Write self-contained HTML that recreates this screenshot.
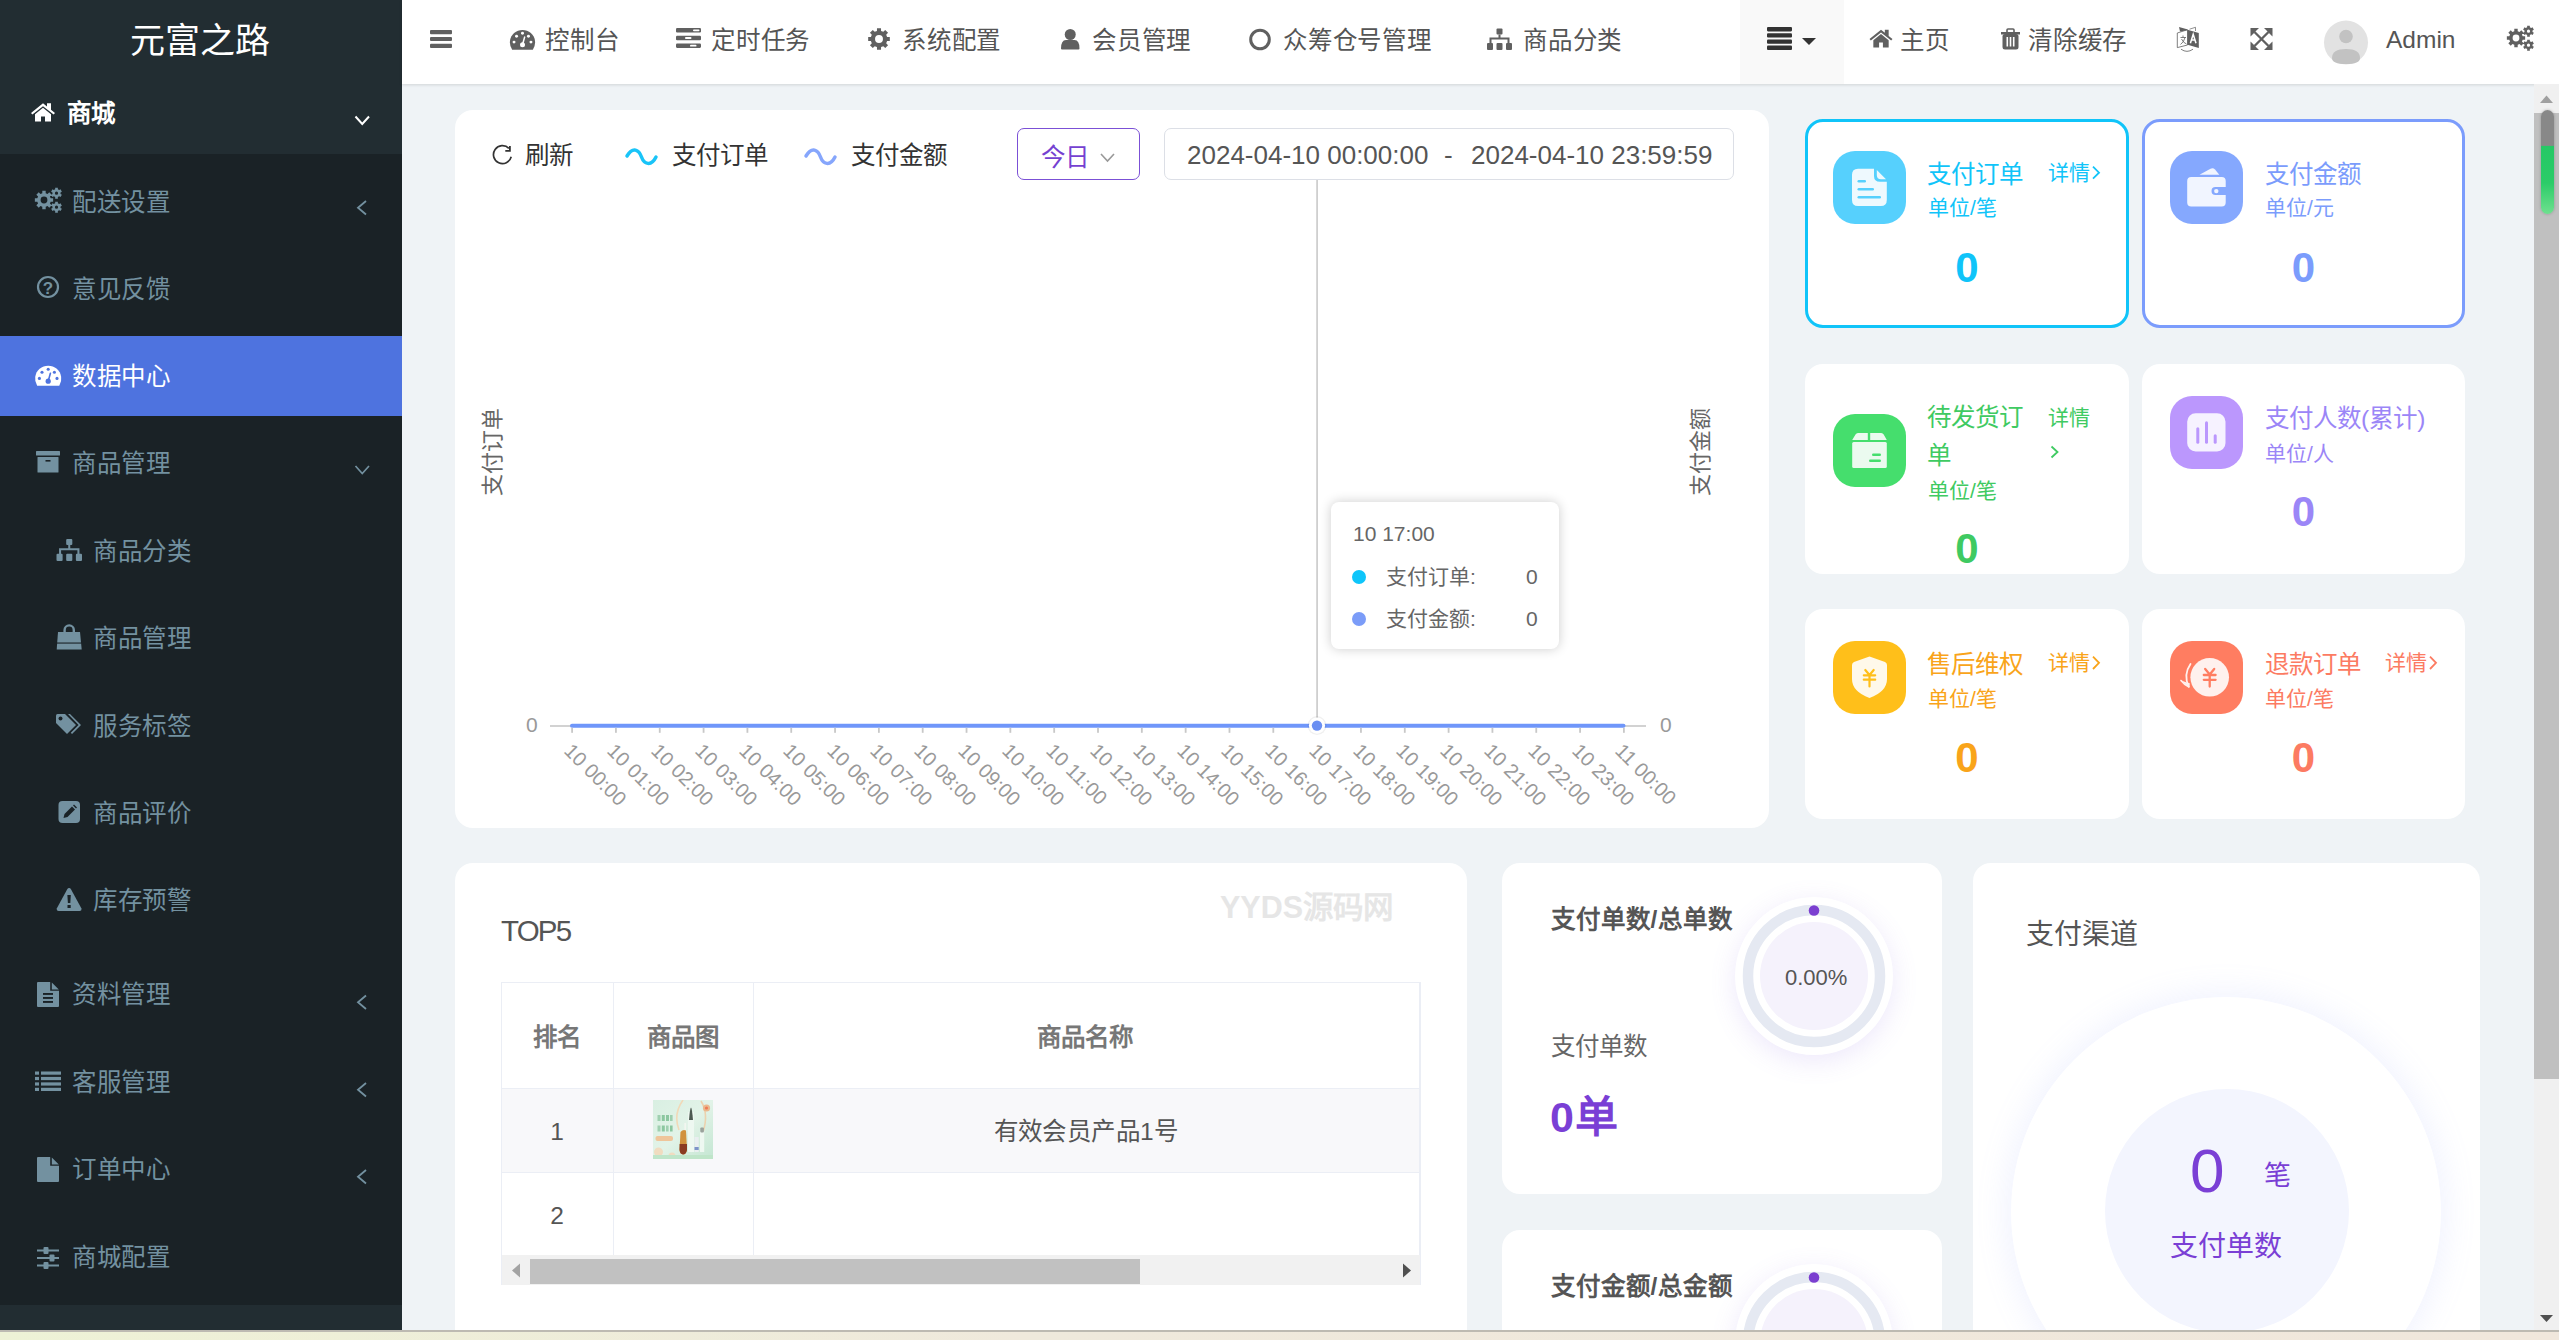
<!DOCTYPE html>
<html lang="zh-CN"><head><meta charset="utf-8"><title>数据中心</title><style>
*{box-sizing:border-box}
html,body{margin:0;padding:0;width:2559px;height:1340px;overflow:hidden;background:#eff3f6;font-family:"Liberation Sans",sans-serif;}
.a{position:absolute;white-space:nowrap}
.ic{position:absolute;left:0;top:0;width:2559px;height:1340px;overflow:visible;pointer-events:none}
.mi{color:#7391a0;font-size:24.5px;line-height:24.5px;letter-spacing:0.7px}
.nv{color:#555;font-size:24.5px;line-height:24.5px;letter-spacing:0.8px}
.card{background:#fff;border-radius:18px}
.t21{font-size:21px;line-height:21px}
.t24{font-size:24.5px;line-height:24.5px}
.xl{font-size:20px;line-height:20px;color:#999;transform-origin:0 0;transform:rotate(45deg)}
</style></head><body>
<div class="a" style="left:0;top:0;width:402px;height:1330px;background:#1a2226"></div>
<div class="a" style="left:0;top:0;width:402px;height:154px;background:#222d32"></div>
<div class="a" style="left:0;top:1305px;width:402px;height:25px;background:#222d32"></div>
<div class="a" style="left:0;top:336px;width:402px;height:80px;background:#4e73df"></div>
<div class="a" style="left:130px;top:23px;font-size:35px;line-height:35px;color:#fff">元富之路</div>
<div class="a t24" style="left:67px;top:102px;color:#fff;font-weight:bold">商城</div>
<div class="a mi" style="left:72px;top:191px;color:#7391a0">配送设置</div>
<div class="a mi" style="left:72px;top:278px;color:#7391a0">意见反馈</div>
<div class="a mi" style="left:72px;top:365px;color:#fff">数据中心</div>
<div class="a mi" style="left:72px;top:452px;color:#7391a0">商品管理</div>
<div class="a mi" style="left:93px;top:540px;color:#7391a0">商品分类</div>
<div class="a mi" style="left:93px;top:627px;color:#7391a0">商品管理</div>
<div class="a mi" style="left:93px;top:715px;color:#7391a0">服务标签</div>
<div class="a mi" style="left:93px;top:802px;color:#7391a0">商品评价</div>
<div class="a mi" style="left:93px;top:889px;color:#7391a0">库存预警</div>
<div class="a mi" style="left:72px;top:983px;color:#7391a0">资料管理</div>
<div class="a mi" style="left:72px;top:1071px;color:#7391a0">客服管理</div>
<div class="a mi" style="left:72px;top:1158px;color:#7391a0">订单中心</div>
<div class="a mi" style="left:72px;top:1246px;color:#7391a0">商城配置</div>
<div class="a" style="left:402px;top:0;width:2157px;height:84px;background:#fff;box-shadow:0 1px 3px rgba(0,0,0,.13)"></div>
<div class="a" style="left:1740px;top:0;width:104px;height:84px;background:#f9f9f9"></div>
<div class="a nv" style="left:545px;top:29px">控制台</div>
<div class="a nv" style="left:711px;top:29px">定时任务</div>
<div class="a nv" style="left:902px;top:29px">系统配置</div>
<div class="a nv" style="left:1092px;top:29px">会员管理</div>
<div class="a nv" style="left:1283px;top:29px">众筹仓号管理</div>
<div class="a nv" style="left:1523px;top:29px">商品分类</div>
<div class="a nv" style="left:1900px;top:29px">主页</div>
<div class="a nv" style="left:2028px;top:29px">清除缓存</div>
<div class="a nv" style="left:2386px;top:28px;letter-spacing:0">Admin</div>
<div class="a card" style="left:455px;top:110px;width:1314px;height:718px"></div>
<div class="a t24" style="left:525px;top:144px;color:#333">刷新</div>
<div class="a t24" style="left:672px;top:144px;color:#333">支付订单</div>
<div class="a t24" style="left:851px;top:144px;color:#333">支付金额</div>
<div class="a" style="left:1017px;top:128px;width:123px;height:52px;border:1.5px solid #7b50d6;border-radius:7px"></div>
<div class="a t24" style="left:1041px;top:146px;color:#7541d1">今日</div>
<div class="a" style="left:1164px;top:128px;width:570px;height:52px;border:1.2px solid #dcdfe6;border-radius:7px"></div>
<div class="a" style="left:1187px;top:140px;font-size:26px;line-height:30px;color:#555">2024-04-10 00:00:00</div>
<div class="a" style="left:1444px;top:140px;font-size:26px;line-height:30px;color:#555">-</div>
<div class="a" style="left:1471px;top:140px;font-size:26px;line-height:30px;color:#555">2024-04-10 23:59:59</div>
<div class="a xl" style="left:574.6px;top:740px">10 00:00</div>
<div class="a xl" style="left:618.4px;top:740px">10 01:00</div>
<div class="a xl" style="left:662.2px;top:740px">10 02:00</div>
<div class="a xl" style="left:706.1px;top:740px">10 03:00</div>
<div class="a xl" style="left:749.9px;top:740px">10 04:00</div>
<div class="a xl" style="left:793.7px;top:740px">10 05:00</div>
<div class="a xl" style="left:837.6px;top:740px">10 06:00</div>
<div class="a xl" style="left:881.4px;top:740px">10 07:00</div>
<div class="a xl" style="left:925.2px;top:740px">10 08:00</div>
<div class="a xl" style="left:969.0px;top:740px">10 09:00</div>
<div class="a xl" style="left:1012.9px;top:740px">10 10:00</div>
<div class="a xl" style="left:1056.7px;top:740px">10 11:00</div>
<div class="a xl" style="left:1100.5px;top:740px">10 12:00</div>
<div class="a xl" style="left:1144.3px;top:740px">10 13:00</div>
<div class="a xl" style="left:1188.2px;top:740px">10 14:00</div>
<div class="a xl" style="left:1232.0px;top:740px">10 15:00</div>
<div class="a xl" style="left:1275.8px;top:740px">10 16:00</div>
<div class="a xl" style="left:1319.6px;top:740px">10 17:00</div>
<div class="a xl" style="left:1363.5px;top:740px">10 18:00</div>
<div class="a xl" style="left:1407.3px;top:740px">10 19:00</div>
<div class="a xl" style="left:1451.1px;top:740px">10 20:00</div>
<div class="a xl" style="left:1494.9px;top:740px">10 21:00</div>
<div class="a xl" style="left:1538.8px;top:740px">10 22:00</div>
<div class="a xl" style="left:1582.6px;top:740px">10 23:00</div>
<div class="a xl" style="left:1626.4px;top:740px">11 00:00</div>
<div class="a" style="left:526px;top:714px;font-size:21px;line-height:21px;color:#999">0</div>
<div class="a" style="left:1660px;top:714px;font-size:21px;line-height:21px;color:#999">0</div>
<div class="a" style="left:482px;top:496px;font-size:22px;line-height:22px;color:#666;transform-origin:0 0;transform:rotate(-90deg)">支付订单</div>
<div class="a" style="left:1690px;top:496px;font-size:22px;line-height:22px;color:#666;transform-origin:0 0;transform:rotate(-90deg)">支付金额</div>
<div class="a" style="left:1331px;top:502px;width:228px;height:147px;background:#fff;border-radius:8px;box-shadow:0 0 12px rgba(0,0,0,.2)"></div>
<div class="a t21" style="left:1353px;top:523px;color:#666">10 17:00</div>
<div class="a t21" style="left:1386px;top:566px;color:#666">支付订单:</div>
<div class="a t21" style="left:1526px;top:566px;color:#666">0</div>
<div class="a t21" style="left:1386px;top:608px;color:#666">支付金额:</div>
<div class="a t21" style="left:1526px;top:608px;color:#666">0</div>
<div class="a card" style="left:1805px;top:119px;width:324px;height:209px;border:3px solid #10c4f9"></div>
<div class="a card" style="left:2142px;top:119px;width:323px;height:209px;border:3px solid #7b9cfc"></div>
<div class="a card" style="left:1805px;top:364px;width:324px;height:210px"></div>
<div class="a card" style="left:2142px;top:364px;width:323px;height:210px"></div>
<div class="a card" style="left:1805px;top:609px;width:324px;height:210px"></div>
<div class="a card" style="left:2142px;top:609px;width:323px;height:210px"></div>
<div class="a t24" style="left:1927px;top:162.5px;color:#10c4f9">支付订单</div>
<div class="a t21" style="left:2048px;top:162px;color:#10c4f9">详情</div>
<div class="a t21" style="left:1928px;top:197px;color:#10c4f9">单位/笔</div>
<div class="a" style="left:1805px;width:324px;text-align:center;top:247px;font-size:42px;line-height:42px;font-weight:bold;color:#10c4f9">0</div>
<div class="a t24" style="left:2265px;top:162.5px;color:#7b9cfc">支付金额</div>
<div class="a t21" style="left:2265px;top:197px;color:#7b9cfc">单位/元</div>
<div class="a" style="left:2142px;width:323px;text-align:center;top:247px;font-size:42px;line-height:42px;font-weight:bold;color:#7b9cfc">0</div>
<div class="a t24" style="left:1927px;top:405.5px;color:#3fca62">待发货订</div>
<div class="a t24" style="left:1927px;top:443.5px;color:#3fca62">单</div>
<div class="a t21" style="left:2048px;top:407px;color:#3fca62">详情</div>
<div class="a t21" style="left:1928px;top:480px;color:#3fca62">单位/笔</div>
<div class="a" style="left:1805px;width:324px;text-align:center;top:528px;font-size:42px;line-height:42px;font-weight:bold;color:#3fca62">0</div>
<div class="a t24" style="left:2265px;top:406.5px;color:#9b86f7">支付人数(累计)</div>
<div class="a t21" style="left:2265px;top:443px;color:#9b86f7">单位/人</div>
<div class="a" style="left:2142px;width:323px;text-align:center;top:491px;font-size:42px;line-height:42px;font-weight:bold;color:#9b86f7">0</div>
<div class="a t24" style="left:1927px;top:652.5px;color:#f9a41a">售后维权</div>
<div class="a t21" style="left:2048px;top:652px;color:#f9a41a">详情</div>
<div class="a t21" style="left:1928px;top:688px;color:#f9a41a">单位/笔</div>
<div class="a" style="left:1805px;width:324px;text-align:center;top:737px;font-size:42px;line-height:42px;font-weight:bold;color:#f9a41a">0</div>
<div class="a t24" style="left:2265px;top:652.5px;color:#fc7b62">退款订单</div>
<div class="a t21" style="left:2385px;top:652px;color:#fc7b62">详情</div>
<div class="a t21" style="left:2265px;top:688px;color:#fc7b62">单位/笔</div>
<div class="a" style="left:2142px;width:323px;text-align:center;top:737px;font-size:42px;line-height:42px;font-weight:bold;color:#fc7b62">0</div>
<div class="a card" style="left:455px;top:863px;width:1012px;height:600px"></div>
<div class="a" style="left:501px;top:915px;font-size:29.5px;line-height:32px;letter-spacing:-1.8px;color:#555">TOP5</div>
<div class="a" style="left:1220px;top:891px;font-size:30.5px;line-height:32px;color:#e6e6e6;font-weight:bold">YYDS源码网</div>
<div class="a" style="left:501px;top:982px;width:920px;height:303px;border:1px solid #ebeef5;border-bottom:none"></div>
<div class="a" style="left:502px;top:1088px;width:918px;height:84px;background:#f8f8fa"></div>
<div class="a" style="left:502px;top:1088px;width:918px;height:1px;background:#ebeef5"></div>
<div class="a" style="left:502px;top:1172px;width:918px;height:1px;background:#ebeef5"></div>
<div class="a" style="left:613px;top:983px;width:1px;height:272px;background:#ebeef5"></div>
<div class="a" style="left:753px;top:983px;width:1px;height:272px;background:#ebeef5"></div>
<div class="a" style="left:1419px;top:983px;width:1px;height:272px;background:#ebeef5"></div>
<div class="a t24" style="left:557px;top:1026px;color:#777;font-weight:bold;transform:translateX(-50%)">排名</div>
<div class="a t24" style="left:683px;top:1026px;color:#777;font-weight:bold;transform:translateX(-50%)">商品图</div>
<div class="a t24" style="left:1085px;top:1026px;color:#777;font-weight:bold;transform:translateX(-50%)">商品名称</div>
<div class="a t24" style="left:557px;top:1120px;color:#555;transform:translateX(-50%)">1</div>
<div class="a t24" style="left:1086px;top:1120px;color:#555;letter-spacing:0.4px;transform:translateX(-50%)">有效会员产品1号</div>
<div class="a t24" style="left:557px;top:1204px;color:#555;transform:translateX(-50%)">2</div>
<svg class="a" style="left:653px;top:1100px" width="60" height="59" viewBox="0 0 60 59"><defs><linearGradient id="tg" x1="0" y1="0" x2="1" y2="1"><stop offset="0" stop-color="#d9efe2"/><stop offset=".5" stop-color="#e2f3e8"/><stop offset="1" stop-color="#c4e6d2"/></linearGradient></defs><rect width="60" height="59" fill="url(#tg)"/><path d="M30,0 Q20,14 26,30" stroke="#f1d9b8" stroke-width="1.6" fill="none"/><path d="M48,1 Q56,14 50,32" stroke="#ecd2ae" stroke-width="1.6" fill="none"/><circle cx="53.5" cy="8" r="3.6" fill="#eab88e"/><circle cx="53.5" cy="8" r="1.6" fill="#f07a55"/><rect x="4.5" y="15" width="3" height="6" fill="#9fd0b0"/><rect x="8.8" y="15" width="3" height="6" fill="#8cc7a0"/><rect x="13" y="15" width="3" height="6" fill="#8cc7a0"/><rect x="17" y="15" width="2.6" height="6" fill="#9fd0b0"/><rect x="4.5" y="25.5" width="3" height="6" fill="#9fd0b0"/><rect x="8.8" y="25.5" width="3" height="6" fill="#8cc7a0"/><rect x="13" y="25.5" width="2.6" height="6" fill="#9fd0b0"/><rect x="17" y="25.5" width="2.6" height="6" fill="#8cc7a0"/><rect x="2.5" y="36" width="17.5" height="5" rx="2" fill="#efc59a"/><circle cx="5.5" cy="52" r="4.5" fill="#f0dcc0"/><circle cx="19" cy="56" r="3.5" fill="#f0dcc0"/><rect x="35" y="12" width="6" height="40" fill="#eef8f1"/><path d="M36,20 Q37,8 38,7.5 Q39,8 40,20 Z" fill="#4e5a52"/><rect x="41.5" y="37" width="4.2" height="15" fill="#e9eef0"/><rect x="41.5" y="47" width="4.2" height="3" fill="#7d93c8"/><rect x="47" y="31" width="4.2" height="21" fill="#eef8f1"/><rect x="47.3" y="27.5" width="3.6" height="5" rx="1" fill="#9aa29c"/><rect x="31.5" y="23" width="1.3" height="9" fill="#f7f7f2"/><path d="M27.5,32 Q30,29 33,30.5 L34,50 Q33,54.5 30,54.5 Q27,54 26.5,50 Z" fill="#d1923e"/><path d="M26.6,44 L34,44 L34,50 Q33,54.5 30,54.5 Q27,54 26.5,50 Z" fill="#8a3b22"/><rect x="0" y="55" width="60" height="4" fill="#bfe5c9"/></svg>
<div class="a" style="left:502px;top:1255px;width:918px;height:30px;background:#f1f1f1"></div>
<div class="a" style="left:530px;top:1259px;width:610px;height:25px;background:#c1c1c1"></div>
<div class="a card" style="left:1502px;top:863px;width:440px;height:331px"></div>
<div class="a card" style="left:1502px;top:1230px;width:440px;height:331px"></div>
<div class="a" style="left:1735px;top:897px;width:158px;height:158px;border-radius:50%;background:#fff;box-shadow:0 6px 26px rgba(140,110,230,.16)"></div>
<div class="a" style="left:1735px;top:1264px;width:158px;height:158px;border-radius:50%;background:#fff;box-shadow:0 6px 26px rgba(140,110,230,.16)"></div>
<div class="a t24" style="left:1551px;top:908px;color:#555;font-weight:bold;letter-spacing:0.9px">支付单数/总单数</div>
<div class="a t24" style="left:1551px;top:1275px;color:#555;font-weight:bold;letter-spacing:0.9px">支付金额/总金额</div>
<div class="a t24" style="left:1551px;top:1035px;color:#666">支付单数</div>
<div class="a" style="left:1550px;top:1096px;font-size:43px;line-height:43px;color:#7a3fd5;font-weight:bold;letter-spacing:1.5px">0单</div>
<div class="a card" style="left:1973px;top:863px;width:507px;height:600px;overflow:hidden"><div class="a" style="left:38px;top:134px;width:430px;height:430px;border-radius:50%;background:#fff;box-shadow:0 0 30px 6px rgba(150,160,250,.13)"></div><div class="a" style="left:132px;top:226px;width:244px;height:244px;border-radius:50%;background:#f3f5fe"></div></div>
<div class="a" style="left:2026px;top:919px;font-size:28px;line-height:32px;color:#555">支付渠道</div>
<div class="a" style="left:2190px;top:1140px;font-size:62px;line-height:62px;color:#7a3fd5">0</div>
<div class="a" style="left:2264px;top:1162px;font-size:27px;line-height:28px;color:#7a3fd5">笔</div>
<div class="a" style="left:2170px;top:1232px;font-size:28px;line-height:30px;color:#7a3fd5">支付单数</div>
<svg class="ic" width="2559" height="1340"><path fill="#fff" fill-rule="evenodd" d="M31.0,113.0 L43.0,103.3 L47.0,106.5 L47.0,103.3 L51.0,103.3 L51.0,109.8 L55.0,113.0 L53.6,114.6 L43.0,106.2 L32.4,114.6 Z M35.0,114.2 L43.0,107.8 L51.0,114.2 L51.0,121.5 L45.0,121.5 L45.0,116.5 L41.0,116.5 L41.0,121.5 L35.0,121.5 Z"/><polyline points="355.5,116.5 362.25,124.0 369.0,116.5" fill="none" stroke="#fff" stroke-width="2.0" stroke-linecap="butt" stroke-linejoin="miter"/><path fill="#7391a0" fill-rule="evenodd" d="M42.30,193.31 L42.30,190.86 L45.70,190.86 L45.70,193.31 L47.53,194.07 L49.27,192.33 L51.67,194.73 L49.93,196.47 L50.69,198.30 L53.14,198.30 L53.14,201.70 L50.69,201.70 L49.93,203.53 L51.67,205.27 L49.27,207.67 L47.53,205.93 L45.70,206.69 L45.70,209.14 L42.30,209.14 L42.30,206.69 L40.47,205.93 L38.73,207.67 L36.33,205.27 L38.07,203.53 L37.31,201.70 L34.86,201.70 L34.86,198.30 L37.31,198.30 L38.07,196.47 L36.33,194.73 L38.73,192.33 L40.47,194.07Z M47.40,200.00 A3.40,3.40 0 1,0 40.60,200.00 A3.40,3.40 0 1,0 47.40,200.00Z M55.17,189.32 L55.14,187.77 L57.86,187.77 L57.83,189.32 L59.19,190.11 L60.53,189.31 L61.88,191.66 L60.52,192.42 L60.52,193.98 L61.88,194.74 L60.53,197.09 L59.19,196.29 L57.83,197.08 L57.86,198.63 L55.14,198.63 L55.17,197.08 L53.81,196.29 L52.47,197.09 L51.12,194.74 L52.48,193.98 L52.48,192.42 L51.12,191.66 L52.47,189.31 L53.81,190.11Z M58.10,193.20 A1.60,1.60 0 1,0 54.90,193.20 A1.60,1.60 0 1,0 58.10,193.20Z M55.17,203.32 L55.14,201.77 L57.86,201.77 L57.83,203.32 L59.19,204.11 L60.53,203.31 L61.88,205.66 L60.52,206.42 L60.52,207.98 L61.88,208.74 L60.53,211.09 L59.19,210.29 L57.83,211.08 L57.86,212.63 L55.14,212.63 L55.17,211.08 L53.81,210.29 L52.47,211.09 L51.12,208.74 L52.48,207.98 L52.48,206.42 L51.12,205.66 L52.47,203.31 L53.81,204.11Z M58.10,207.20 A1.60,1.60 0 1,0 54.90,207.20 A1.60,1.60 0 1,0 58.10,207.20Z"/><polyline points="366,201 358,207.75 366,214.5" fill="none" stroke="#7391a0" stroke-width="1.8" stroke-linecap="butt" stroke-linejoin="miter"/><circle cx="48" cy="287" r="10" fill="none" stroke="#7391a0" stroke-width="2.2"/><text x="48" y="294" text-anchor="middle" font-family="Liberation Sans" font-weight="bold" font-size="17" fill="#7391a0">?</text><path fill="#fff" fill-rule="evenodd" d="M37.13,385.80 A13.10,13.10 0 1,1 59.27,385.80 Z"/><circle cx="39.40" cy="378.40" r="1.55" fill="#4e73df"/><circle cx="42.00" cy="372.20" r="1.55" fill="#4e73df"/><circle cx="48.20" cy="369.20" r="1.55" fill="#4e73df"/><circle cx="54.40" cy="372.20" r="1.55" fill="#4e73df"/><circle cx="57.00" cy="378.40" r="1.55" fill="#4e73df"/><path d="M48.20,381.20 L50.40,373.20" stroke="#4e73df" stroke-width="1.60" stroke-linecap="round"/><circle cx="48.20" cy="381.20" r="2.60" fill="#4e73df"/><rect x="36" y="451" width="24" height="4.5" rx="0.5" fill="#7391a0"/><rect x="37.5" y="457" width="21" height="15.5" rx="0.5" fill="#7391a0"/><rect x="45.5" y="460" width="5" height="1.6" rx="0" fill="#1a2226"/><polyline points="355.5,466 362.25,473.5 369.0,466" fill="none" stroke="#7391a0" stroke-width="1.7" stroke-linecap="butt" stroke-linejoin="miter"/><rect x="66.19" y="539" width="6.12" height="6.12" rx="1" fill="#7391a0"/><path d="M69.25,545.12 V549.71 M60.07,554.3 V549.2 H78.43 V554.3" stroke="#7391a0" stroke-width="2.04" fill="none"/><rect x="56.5" y="553.79" width="6.12" height="7.209999999999999" rx="1" fill="#7391a0"/><rect x="66.19" y="553.79" width="6.12" height="7.209999999999999" rx="1" fill="#7391a0"/><rect x="75.88" y="553.79" width="6.12" height="7.209999999999999" rx="1" fill="#7391a0"/><path d="M58.0,632.0 H80.0 L81.7,649.4 H56.7 Z" fill="#7391a0"/><rect x="56.7" y="642.4999999999999" width="25" height="1.1" rx="0" fill="#1a2226"/><path d="M64.60000000000001,634.4 V630.0 A4.6,4.6 0 0,1 73.80000000000001,630.0 V634.4" stroke="#7391a0" stroke-width="2.4" fill="none"/><path fill="#7391a0" fill-rule="evenodd" d="M56,715.5 Q56,714 57.5,714 H65 L76,725 L67,734 L56,723 Z"/><circle cx="60.5" cy="718.5" r="2" fill="#1a2226"/><path d="M68,714 H70 L81,725 L72,734 L70.8,732.8 L78.6,725 Z" fill="#7391a0"/><rect x="58.5" y="801" width="21.5" height="22" rx="4" fill="#7391a0"/><path d="M63.5,818 L64.5,814 L72.0,806.5 L75.0,809.5 L67.5,817 Z" fill="#1a2226"/><path d="M73.0,805.5 L74.0,804.5 L77.0,807.5 L76.0,808.5 Z" fill="#1a2226"/><path fill="#7391a0" fill-rule="evenodd" d="M69.1,888 Q70.3,888 71.1,889.4 L81.6,908.8 Q81.6,911 79.6,911 H58.6 Q56.6,911 56.6,908.8 L67.1,889.4 Q67.89999999999999,888 69.1,888 Z"/><path d="M67.39999999999999,895 H70.8 L70.3,903 H67.89999999999999 Z" fill="#1a2226"/><rect x="67.5" y="905" width="3.2" height="3" rx="0" fill="#1a2226"/><path fill="#7391a0" fill-rule="evenodd" d="M38,982 H50.2 V990.8 H59 V1006 Q59,1007 58,1007 H38 Q37,1007 37,1006 V983 Q37,982 38,982 Z"/><path d="M51.800000000000004,982.6 L58.8,989.4 H51.800000000000004 Z" fill="#7391a0"/><rect x="43" y="993" width="10" height="1.9" rx="0" fill="#1a2226"/><rect x="43" y="997" width="10" height="1.9" rx="0" fill="#1a2226"/><rect x="43" y="1001" width="10" height="1.9" rx="0" fill="#1a2226"/><polyline points="366,995.5 358,1002.25 366,1009.0" fill="none" stroke="#7391a0" stroke-width="1.8" stroke-linecap="butt" stroke-linejoin="miter"/><rect x="35" y="1071.50" width="4" height="3.2" rx="0" fill="#7391a0"/><rect x="41" y="1071.50" width="20" height="3.2" rx="0" fill="#7391a0"/><rect x="35" y="1076.93" width="4" height="3.2" rx="0" fill="#7391a0"/><rect x="41" y="1076.93" width="20" height="3.2" rx="0" fill="#7391a0"/><rect x="35" y="1082.37" width="4" height="3.2" rx="0" fill="#7391a0"/><rect x="41" y="1082.37" width="20" height="3.2" rx="0" fill="#7391a0"/><rect x="35" y="1087.80" width="4" height="3.2" rx="0" fill="#7391a0"/><rect x="41" y="1087.80" width="20" height="3.2" rx="0" fill="#7391a0"/><polyline points="366,1083 358,1089.75 366,1096.5" fill="none" stroke="#7391a0" stroke-width="1.8" stroke-linecap="butt" stroke-linejoin="miter"/><path fill="#7391a0" fill-rule="evenodd" d="M38,1157 H50.2 V1165.8 H59 V1181 Q59,1182 58,1182 H38 Q37,1182 37,1181 V1158 Q37,1157 38,1157 Z"/><path d="M51.800000000000004,1157.6 L58.8,1164.3999999999999 H51.800000000000004 Z" fill="#7391a0"/><polyline points="366,1170 358,1176.75 366,1183.5" fill="none" stroke="#7391a0" stroke-width="1.8" stroke-linecap="butt" stroke-linejoin="miter"/><rect x="37" y="1249.50" width="22" height="2" rx="0" fill="#7391a0"/><rect x="43.5" y="1247.00" width="5" height="7" rx="1" fill="#7391a0"/><rect x="37" y="1257.00" width="22" height="2" rx="0" fill="#7391a0"/><rect x="49.5" y="1254.50" width="5" height="7" rx="1" fill="#7391a0"/><rect x="37" y="1264.50" width="22" height="2" rx="0" fill="#7391a0"/><rect x="43.5" y="1262.00" width="5" height="7" rx="1" fill="#7391a0"/><rect x="430" y="30.00" width="22" height="4.2" rx="1.05" fill="#606060"/><rect x="430" y="36.90" width="22" height="4.2" rx="1.05" fill="#606060"/><rect x="430" y="43.80" width="22" height="4.2" rx="1.05" fill="#606060"/><path fill="#606060" fill-rule="evenodd" d="M512.16,49.70 A12.60,12.60 0 1,1 532.84,49.70 Z"/><circle cx="514.04" cy="42.12" r="1.49" fill="#fff"/><circle cx="516.54" cy="36.15" r="1.49" fill="#fff"/><circle cx="522.50" cy="33.27" r="1.49" fill="#fff"/><circle cx="528.46" cy="36.15" r="1.49" fill="#fff"/><circle cx="530.96" cy="42.12" r="1.49" fill="#fff"/><path d="M522.50,44.81 L524.62,37.12" stroke="#fff" stroke-width="1.54" stroke-linecap="round"/><circle cx="522.50" cy="44.81" r="2.50" fill="#fff"/><rect x="676" y="28.00" width="25" height="4.6" rx="1.15" fill="#606060"/><rect x="676" y="35.70" width="25" height="4.6" rx="1.15" fill="#606060"/><rect x="676" y="43.40" width="25" height="4.6" rx="1.15" fill="#606060"/><rect x="693" y="29.4" width="6.5" height="1.8" rx="0.9" fill="#fff"/><rect x="685" y="37.1" width="6.5" height="1.8" rx="0.9" fill="#fff"/><rect x="690" y="44.8" width="6.5" height="1.8" rx="0.9" fill="#fff"/><path fill="#606060" fill-rule="evenodd" d="M876.94,30.90 L876.99,28.18 L881.01,28.18 L881.06,30.90 L883.28,31.82 L885.23,29.93 L888.07,32.77 L886.18,34.72 L887.10,36.94 L889.82,36.99 L889.82,41.01 L887.10,41.06 L886.18,43.28 L888.07,45.23 L885.23,48.07 L883.28,46.18 L881.06,47.10 L881.01,49.82 L876.99,49.82 L876.94,47.10 L874.72,46.18 L872.77,48.07 L869.93,45.23 L871.82,43.28 L870.90,41.06 L868.18,41.01 L868.18,36.99 L870.90,36.94 L871.82,34.72 L869.93,32.77 L872.77,29.93 L874.72,31.82Z M882.96,39.00 A3.96,3.96 0 1,0 875.04,39.00 A3.96,3.96 0 1,0 882.96,39.00Z"/><circle cx="1070.25" cy="34.5" r="5.5" fill="#606060"/><path d="M1061,48.5 Q1061,40 1066,40 H1074.5 Q1079.5,40 1079.5,48.5 Q1079.5,49.5 1078.5,49.5 H1062 Q1061,49.5 1061,48.5 Z" fill="#606060"/><circle cx="1260" cy="39.5" r="9.3" fill="none" stroke="#606060" stroke-width="3"/><rect x="1496.5" y="28.5" width="6.0" height="6.0" rx="1" fill="#606060"/><path d="M1499.5,34.5 V39.0 M1490.5,43.5 V38.5 H1508.5 V43.5" stroke="#606060" stroke-width="2.0" fill="none"/><rect x="1487.0" y="43.0" width="6.0" height="7.0" rx="1" fill="#606060"/><rect x="1496.5" y="43.0" width="6.0" height="7.0" rx="1" fill="#606060"/><rect x="1506.0" y="43.0" width="6.0" height="7.0" rx="1" fill="#606060"/><rect x="1767" y="27.00" width="25" height="4.4" rx="1.1" fill="#333"/><rect x="1767" y="33.20" width="25" height="4.4" rx="1.1" fill="#333"/><rect x="1767" y="39.40" width="25" height="4.4" rx="1.1" fill="#333"/><rect x="1767" y="45.60" width="25" height="4.4" rx="1.1" fill="#333"/><path d="M1802,38 H1816 L1809.0,45 Z" fill="#333"/><path fill="#606060" fill-rule="evenodd" d="M1869.5,39.083333333333336 L1881.0,29.7875 L1884.8333333333333,32.854166666666664 L1884.8333333333333,29.7875 L1888.6666666666667,29.7875 L1888.6666666666667,36.016666666666666 L1892.5,39.083333333333336 L1891.1583333333333,40.61666666666667 L1881.0,32.56666666666667 L1870.8416666666667,40.61666666666667 Z M1873.3333333333333,40.233333333333334 L1881.0,34.1 L1888.6666666666667,40.233333333333334 L1888.6666666666667,47.5 L1882.9166666666667,47.5 L1882.9166666666667,42.4375 L1879.0833333333333,42.4375 L1879.0833333333333,47.5 L1873.3333333333333,47.5 Z"/><rect x="2001" y="32" width="19" height="2.5" rx="0" fill="#606060"/><path d="M2007,32 V30 Q2007,29 2008,29 H2013 Q2014,29 2014,30 V32" stroke="#606060" stroke-width="1.6" fill="none"/><rect x="2002.5" y="34" width="16" height="15.5" rx="2.5" fill="#606060"/><rect x="2006.5" y="37" width="1.6" height="9.5" rx="0" fill="#fff"/><rect x="2009.7" y="37" width="1.6" height="9.5" rx="0" fill="#fff"/><rect x="2012.9" y="37" width="1.6" height="9.5" rx="0" fill="#fff"/><path d="M2179,27 L2187,29.3 V30.2 L2180,31.6 Z" fill="#606060"/><path d="M2177.3,33 L2187.5,29.7 V45 L2177.3,47.6 Z" fill="none" stroke="#606060" stroke-width="0.8"/><path d="M2187.5,29.7 L2198.8,33 V48 L2187.5,44.8 Z" fill="#606060"/><path d="M2190.4,43.2 L2193.2,34.2 L2196,43.2 M2191.4,40 H2195" stroke="#fff" stroke-width="1.5" fill="none"/><path d="M2189.5,29.2 L2195.5,27.3 V31" stroke="#606060" stroke-width="0.7" fill="none"/><path d="M2181,49.2 Q2187,53.5 2193,49.2" stroke="#606060" stroke-width="0.8" fill="none"/><path d="M2180.5,37.5 H2186 M2183,35.5 V37.5 M2185,37.5 Q2184,42 2180.5,44.5 M2181.5,39 Q2183.5,43 2186.5,44" stroke="#606060" stroke-width="0.8" fill="none"/><path d="M2250.5,28 H2259.0 L2255.7,31.3 L2253.8,33.2 L2250.5,36.5 Z" fill="#606060"/><path d="M2272.5,28 H2264.0 L2267.3,31.3 L2269.2,33.2 L2272.5,36.5 Z" fill="#606060"/><path d="M2250.5,50 H2259.0 L2255.7,46.7 L2253.8,44.8 L2250.5,41.5 Z" fill="#606060"/><path d="M2272.5,50 H2264.0 L2267.3,46.7 L2269.2,44.8 L2272.5,41.5 Z" fill="#606060"/><path d="M2254.5,32 L2268.5,46 M2268.5,32 L2254.5,46" stroke="#606060" stroke-width="2.3"/><circle cx="2346" cy="42.5" r="22" fill="#e2e2e2"/><circle cx="2346" cy="36.5" r="6.8" fill="#c2c2c2"/><path d="M2332,58 Q2332,49 2346,49 Q2360,49 2360,58 Q2360,64 2346,64 Q2332,64 2332,58Z" fill="#c2c2c2"/><path fill="#606060" fill-rule="evenodd" d="M2514.30,31.31 L2514.30,28.86 L2517.70,28.86 L2517.70,31.31 L2519.53,32.07 L2521.27,30.33 L2523.67,32.73 L2521.93,34.47 L2522.69,36.30 L2525.14,36.30 L2525.14,39.70 L2522.69,39.70 L2521.93,41.53 L2523.67,43.27 L2521.27,45.67 L2519.53,43.93 L2517.70,44.69 L2517.70,47.14 L2514.30,47.14 L2514.30,44.69 L2512.47,43.93 L2510.73,45.67 L2508.33,43.27 L2510.07,41.53 L2509.31,39.70 L2506.86,39.70 L2506.86,36.30 L2509.31,36.30 L2510.07,34.47 L2508.33,32.73 L2510.73,30.33 L2512.47,32.07Z M2519.40,38.00 A3.40,3.40 0 1,0 2512.60,38.00 A3.40,3.40 0 1,0 2519.40,38.00Z M2527.17,27.32 L2527.14,25.77 L2529.86,25.77 L2529.83,27.32 L2531.19,28.11 L2532.53,27.31 L2533.88,29.66 L2532.52,30.42 L2532.52,31.98 L2533.88,32.74 L2532.53,35.09 L2531.19,34.29 L2529.83,35.08 L2529.86,36.63 L2527.14,36.63 L2527.17,35.08 L2525.81,34.29 L2524.47,35.09 L2523.12,32.74 L2524.48,31.98 L2524.48,30.42 L2523.12,29.66 L2524.47,27.31 L2525.81,28.11Z M2530.10,31.20 A1.60,1.60 0 1,0 2526.90,31.20 A1.60,1.60 0 1,0 2530.10,31.20Z M2527.17,41.32 L2527.14,39.77 L2529.86,39.77 L2529.83,41.32 L2531.19,42.11 L2532.53,41.31 L2533.88,43.66 L2532.52,44.42 L2532.52,45.98 L2533.88,46.74 L2532.53,49.09 L2531.19,48.29 L2529.83,49.08 L2529.86,50.63 L2527.14,50.63 L2527.17,49.08 L2525.81,48.29 L2524.47,49.09 L2523.12,46.74 L2524.48,45.98 L2524.48,44.42 L2523.12,43.66 L2524.47,41.31 L2525.81,42.11Z M2530.10,45.20 A1.60,1.60 0 1,0 2526.90,45.20 A1.60,1.60 0 1,0 2530.10,45.20Z"/><path d="M508.9,148.3 A9,9 0 1,0 511.2,156.8" stroke="#333" stroke-width="1.7" fill="none"/><polyline points="505.3,150.8 509.9,150.8 509.9,146" fill="none" stroke="#333" stroke-width="1.8" stroke-linecap="butt" stroke-linejoin="miter"/><path d="M627,156 C633,146 639,150 641.5,157 C644,164 651,167 656,157" fill="none" stroke="#19c4f8" stroke-width="3.5" stroke-linecap="round"/><path d="M806,156 C812,146 818,150 820.5,157 C823,164 830,167 835,157" fill="none" stroke="#86a6fc" stroke-width="3.5" stroke-linecap="round"/><polyline points="1101,154 1107.5,161 1114,154" fill="none" stroke="#999" stroke-width="1.6" stroke-linecap="butt" stroke-linejoin="miter"/><rect x="1316.2" y="180" width="1.8" height="540" rx="0" fill="#cfcfcf"/><rect x="550" y="725.2" width="1096" height="1.6" rx="0" fill="#c8c8c8"/><rect x="570" y="723.8" width="1055.5" height="4" rx="2" fill="#6f96fa"/><rect x="571.20" y="727.8" width="1.8" height="5" rx="0" fill="#c8c8c8"/><rect x="615.03" y="727.8" width="1.8" height="5" rx="0" fill="#c8c8c8"/><rect x="658.85" y="727.8" width="1.8" height="5" rx="0" fill="#c8c8c8"/><rect x="702.68" y="727.8" width="1.8" height="5" rx="0" fill="#c8c8c8"/><rect x="746.50" y="727.8" width="1.8" height="5" rx="0" fill="#c8c8c8"/><rect x="790.33" y="727.8" width="1.8" height="5" rx="0" fill="#c8c8c8"/><rect x="834.15" y="727.8" width="1.8" height="5" rx="0" fill="#c8c8c8"/><rect x="877.98" y="727.8" width="1.8" height="5" rx="0" fill="#c8c8c8"/><rect x="921.80" y="727.8" width="1.8" height="5" rx="0" fill="#c8c8c8"/><rect x="965.63" y="727.8" width="1.8" height="5" rx="0" fill="#c8c8c8"/><rect x="1009.45" y="727.8" width="1.8" height="5" rx="0" fill="#c8c8c8"/><rect x="1053.28" y="727.8" width="1.8" height="5" rx="0" fill="#c8c8c8"/><rect x="1097.10" y="727.8" width="1.8" height="5" rx="0" fill="#c8c8c8"/><rect x="1140.93" y="727.8" width="1.8" height="5" rx="0" fill="#c8c8c8"/><rect x="1184.75" y="727.8" width="1.8" height="5" rx="0" fill="#c8c8c8"/><rect x="1228.58" y="727.8" width="1.8" height="5" rx="0" fill="#c8c8c8"/><rect x="1272.40" y="727.8" width="1.8" height="5" rx="0" fill="#c8c8c8"/><rect x="1316.23" y="727.8" width="1.8" height="5" rx="0" fill="#c8c8c8"/><rect x="1360.05" y="727.8" width="1.8" height="5" rx="0" fill="#c8c8c8"/><rect x="1403.88" y="727.8" width="1.8" height="5" rx="0" fill="#c8c8c8"/><rect x="1447.70" y="727.8" width="1.8" height="5" rx="0" fill="#c8c8c8"/><rect x="1491.53" y="727.8" width="1.8" height="5" rx="0" fill="#c8c8c8"/><rect x="1535.35" y="727.8" width="1.8" height="5" rx="0" fill="#c8c8c8"/><rect x="1579.18" y="727.8" width="1.8" height="5" rx="0" fill="#c8c8c8"/><rect x="1623.00" y="727.8" width="1.8" height="5" rx="0" fill="#c8c8c8"/><circle cx="1317" cy="725.6" r="9.5" fill="#000" opacity=".06"/><circle cx="1317" cy="725.6" r="8.1" fill="#fff"/><circle cx="1317" cy="725.6" r="5.2" fill="#6b8ff2"/><rect x="1833" y="151" width="73" height="73" rx="22" fill="#56d0fd"/><path d="M1858,168.7 H1874 L1874,176 Q1874,181.8 1880,181.8 H1886.8 V200 Q1886.8,206 1880.8,206 H1858 Q1852,206 1852,200 V174.7 Q1852,168.7 1858,168.7 Z" fill="#eef9fe"/><path d="M1876.8,170 L1886,179.2 H1881 Q1876.8,179.2 1876.8,175 Z" fill="#eef9fe"/><rect x="1857.5" y="180" width="8.5" height="2.6" rx="1.3" fill="#56d0fd"/><rect x="1857.5" y="188" width="16.5" height="2.6" rx="1.3" fill="#56d0fd"/><rect x="1857.5" y="196" width="23.5" height="2.6" rx="1.3" fill="#56d0fd"/><polyline points="2093,166.7 2099,172.7 2093,178.7" fill="none" stroke="#10c4f9" stroke-width="1.8" stroke-linecap="butt" stroke-linejoin="miter"/><rect x="2170" y="151" width="73" height="73" rx="22" fill="#85a8fe"/><path d="M2199.5,174.7 L2210.5,168.8 Q2213,167.6 2215,169.5 L2219.3,174.7 Z" fill="#f1f5ff"/><path d="M2191.2,177 H2221.7 Q2225.7,177 2225.7,181 V187 H2215.5 Q2211.5,187 2211.5,191 Q2211.5,195 2215.5,195 H2225.7 V202.4 Q2225.7,206.4 2221.7,206.4 H2191.2 Q2187.2,206.4 2187.2,202.4 V181 Q2187.2,177 2191.2,177 Z" fill="#f1f5ff"/><circle cx="2216.3" cy="191.1" r="2.2" fill="#f1f5ff"/><rect x="1833" y="414" width="73" height="73" rx="22" fill="#45de6d"/><path d="M1852.2,440 L1855.5,434.5 Q1856.3,433 1858,433 H1867.8 V440 Z M1870.2,433 H1881.2 Q1882.9,433 1883.7,434.5 L1886.8,440 H1870.2 Z" fill="#ebfaef"/><rect x="1852.2" y="442" width="34.6" height="26" rx="1.5" fill="#ebfaef"/><rect x="1872" y="453.5" width="9" height="2.6" rx="1.3" fill="#45de6d"/><rect x="1869" y="459.5" width="12" height="2.6" rx="1.3" fill="#45de6d"/><polyline points="2051.5,446.5 2057.5,452 2051.5,457.5" fill="none" stroke="#3fca62" stroke-width="1.8" stroke-linecap="butt" stroke-linejoin="miter"/><rect x="2170" y="396" width="73" height="73" rx="22" fill="#bb97fd"/><rect x="2187.2" y="413.2" width="38.3" height="38.3" rx="8.5" fill="#f6f2ff"/><rect x="2196.3" y="427.3" width="3" height="16.4" rx="1.5" fill="#bb97fd"/><rect x="2205" y="421.2" width="3" height="22.5" rx="1.5" fill="#bb97fd"/><rect x="2213.7" y="434.3" width="3" height="9.4" rx="1.5" fill="#bb97fd"/><rect x="1833" y="641" width="73" height="73" rx="22" fill="#ffbf1a"/><path d="M1869.5,656.6 L1885,662 Q1887,662.8 1887,665 V679 Q1887,691.5 1869.5,698 Q1852,691.5 1852,679 V665 Q1852,662.8 1854,662 Z" fill="#fff9ea"/><path d="M1865.3,670 L1869.5,675 L1873.7,670 M1863.8,675.3 H1875.2 M1863.8,679.7 H1875.2 M1869.5,675 V686.4" stroke="#ffbf1a" stroke-width="2.2" fill="none" stroke-linecap="round"/><polyline points="2093,656.6 2099,662.8 2093,669" fill="none" stroke="#f9a41a" stroke-width="1.8" stroke-linecap="butt" stroke-linejoin="miter"/><rect x="2170" y="641" width="73" height="73" rx="22" fill="#ff7d61"/><circle cx="2209.7" cy="677.3" r="19.3" fill="#fff1ee"/><path d="M2190.5,664 Q2183,675 2188.8,686.5" stroke="#fff1ee" stroke-width="1.8" fill="none" stroke-linecap="round"/><path d="M2181,680.5 L2189,687 L2190,683.5 Z" fill="#fff1ee"/><path d="M2181,680.5 Q2184,684.5 2189,687" stroke="#fff1ee" stroke-width="1.6" fill="none" stroke-linecap="round"/><path d="M2205.2,669 L2209.7,674.5 L2214.2,669 M2203.8,675 H2215.6 M2203.8,679.8 H2215.6 M2209.7,674.5 V686.5" stroke="#ff7d61" stroke-width="2.3" fill="none" stroke-linecap="round"/><polyline points="2430,656.6 2436,662.8 2430,669" fill="none" stroke="#fc7b62" stroke-width="1.8" stroke-linecap="butt" stroke-linejoin="miter"/><path d="M520,1263.5 V1277.5 L512,1270.5 Z" fill="#a3a3a3"/><path d="M1403,1263.5 V1277.5 L1411,1270.5 Z" fill="#505050"/><circle cx="1814" cy="976" r="66" fill="none" stroke="#e5e9f2" stroke-width="10.5"/><circle cx="1814" cy="976" r="54" fill="#f5f2fc"/><circle cx="1814" cy="910.5" r="5.3" fill="#7b3fd0"/><circle cx="1814" cy="1343" r="66" fill="none" stroke="#e5e9f2" stroke-width="10.5"/><circle cx="1814" cy="1343" r="54" fill="#f5f2fc"/><circle cx="1814" cy="1277.5" r="5.3" fill="#7b3fd0"/></svg>
<div class="a" style="left:1785px;top:967px;font-size:22px;line-height:22px;color:#555">0.00%</div>
<svg class="ic" width="2559" height="1340"><circle cx="1359" cy="577" r="7" fill="#0ec5fa"/><circle cx="1359" cy="619" r="7" fill="#7b9cf8"/></svg>
<div class="a" style="left:2534px;top:84px;width:25px;height:1246px;background:#f0f0f0"></div>
<div class="a" style="left:2534px;top:113px;width:25px;height:966px;background:#c0c0c0"></div>
<div class="a" style="left:2541px;top:110px;width:13px;height:104px;border-radius:7px;background:linear-gradient(180deg,#888 0,#888 34%,#25c865 35%,#2bcc68 70%,#6fe08f 100%);box-shadow:0 0 3px rgba(0,0,0,.25)"></div>
<svg class="ic" width="2559" height="1340"><path d="M2540,103 L2546.5,95.5 L2553,103 Z" fill="#a0a0a0"/><path d="M2540,1315 L2546.5,1322 L2553,1315 Z" fill="#505050"/></svg>
<div class="a" style="left:0;top:1330px;width:2559px;height:10px;background:linear-gradient(90deg,#eef2d6,#efe9dc 40%,#f0e7dc);border-top:2px solid #bdbab2"></div>
</body></html>
